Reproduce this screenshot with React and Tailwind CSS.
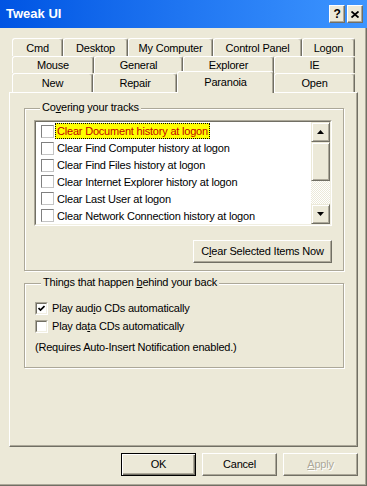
import { useState } from "react";

const raised = "border border-t-white border-l-white border-r-[#716F64] border-b-[#716F64] shadow-[inset_-1px_-1px_0_#ACA899]";
const sbButton = "border border-t-[#ECE9D8] border-l-[#ECE9D8] border-r-[#716F64] border-b-[#716F64] shadow-[inset_1px_1px_0_#ffffff,inset_-1px_-1px_0_#ACA899] bg-[#ECE9D8]";

const tabRows = [
	[
		{ label: "Cmd", w: "w-[51px]" },
		{ label: "Desktop", w: "w-[65px]" },
		{ label: "My Computer", w: "w-[85px]" },
		{ label: "Control Panel", w: "w-[89px]" },
		{ label: "Logon", w: "w-[53px]" },
	],
	[
		{ label: "Mouse", w: "w-[82px]" },
		{ label: "General", w: "w-[89px]" },
		{ label: "Explorer", w: "w-[91px]" },
		{ label: "IE", w: "w-[81px]" },
	],
	[
		{ label: "New", w: "w-[81px]" },
		{ label: "Repair", w: "w-[84px]" },
		{ label: "Paranoia", w: "w-[97px]", selected: true },
		{ label: "Open", w: "w-[81px]" },
	],
];

const rowHeights = [ "h-[18px]", "h-[17px]", "h-[19px]" ];

const trackItems = [
	"Clear Document history at logon",
	"Clear Find Computer history at logon",
	"Clear Find Files history at logon",
	"Clear Internet Explorer history at logon",
	"Clear Last User at logon",
	"Clear Network Connection history at logon",
];

function Tab({ label, w, selected }) {
	const base = "flex items-center justify-center border-t border-l border-r border-t-white border-l-white border-r-[#716F64] rounded-t-[3px] shadow-[inset_-1px_0_0_#ACA899] bg-[#ECE9D8]";
	if(selected) {
		return <div className={ `${ base } ${ w } relative z-10 -mt-[2px] h-[22px] self-start pb-[1px]` }>{ label }</div>;
	}
	return <div className={ `${ base } ${ w } h-full pt-[1px]` }>{ label }</div>;
}

function ListCheck() {
	return <div className="w-[13px] h-[13px] shrink-0 bg-white border border-t-[#808080] border-l-[#808080] border-r-[#c4c4c4] border-b-[#c4c4c4]" />;
}

function Check3D({ checked }) {
	return (
		<div className="w-[13px] h-[13px] shrink-0 border border-t-[#ACA899] border-l-[#ACA899] border-r-white border-b-white">
			<div className="w-full h-full bg-white border border-t-[#716F64] border-l-[#716F64] border-r-[#F1EFE2] border-b-[#F1EFE2] flex items-center justify-center">
				{ checked && (
					<svg width="7" height="7" viewBox="0 0 7 7">
						<path d="M0.5 3 L2.5 5 L6.5 1" fill="none" stroke="#000" strokeWidth="1.7" />
					</svg>
				) }
			</div>
		</div>
	);
}

function Arrow({ up }) {
	return (
		<svg width="7" height="4" viewBox="0 0 7 4">
			<polygon points={ up ? "3.5,0 7,4 0,4" : "0,0 7,0 3.5,4" } fill="#000" />
		</svg>
	);
}

function GroupBox({ label, children, className }) {
	return (
		<div className={ `flex flex-col w-[320px] border border-[#ACA899] shadow-[inset_1px_1px_0_#ffffff,1px_1px_0_#ffffff] ${ className }` }>
			<div className="-mt-[8px] ml-[6px] px-[2px] h-[13px] leading-[13px] self-start bg-[#ECE9D8]">{ label }</div>
			{ children }
		</div>
	);
}

export default function App() {
	const [ selected ] = useState(0);

	return (
		<div className="w-[367px] h-[486px] flex flex-col bg-[#ECE9D8] text-[11px] tracking-[-0.2px] text-black font-['Liberation_Sans',Arial,sans-serif] overflow-hidden">
			<div className="h-[28px] shrink-0 flex items-center pl-[6px] pr-[4px] bg-linear-to-r from-[#0054E3] to-[#3D95FF]">
				<span className="flex-1 text-white font-bold text-[13px] tracking-normal">Tweak UI</span>
				<div className="flex gap-[2px]">
					<div className={ `w-[16px] h-[18px] bg-[#ECE9D8] flex items-center justify-center font-bold text-[12px] ${ raised }` }>?</div>
					<div className={ `w-[16px] h-[18px] bg-[#ECE9D8] flex items-center justify-center ${ raised }` }>
						<svg width="8" height="7" viewBox="0 0 8 7">
							<path d="M0.5 0.5 L7.5 6.5 M7.5 0.5 L0.5 6.5" stroke="#000" strokeWidth="1.8" />
						</svg>
					</div>
				</div>
			</div>

			<div className="flex-1 flex flex-col pl-[9px] pt-[10px] border-r border-b border-[#716F64] shadow-[inset_-1px_-1px_0_#ACA899]">
				<div className="ml-[3px] w-[343px] flex flex-col">
					{ tabRows.map((row, i) => (
						<div key={ i } className={ `flex ${ rowHeights[ i ] }` }>
							{ row.map(t => <Tab key={ t.label } { ...t } />) }
						</div>
					)) }
				</div>

				<div className="w-[349px] h-[355px] flex flex-col pl-[14px] border border-t-white border-l-white border-r-[#716F64] border-b-[#716F64] shadow-[inset_-1px_-1px_0_#ACA899]">
					<GroupBox label={ <>Co<u>v</u>ering your tracks</> } className="mt-[15px] pl-[9px] pr-[11px] pb-[7px]">
						<div className="mt-[6px] w-[298px] h-[106px] border border-t-[#ACA899] border-l-[#ACA899] border-r-white border-b-white">
							<div className="w-full h-full flex bg-white border border-t-[#716F64] border-l-[#716F64] border-r-[#F1EFE2] border-b-[#F1EFE2]">
								<div className="flex-1 flex flex-col pt-[1px] pl-[5px]">
									{ trackItems.map((item, i) => (
										<div key={ item } className="h-[17px] flex items-center whitespace-nowrap">
											<ListCheck />
											<span className={ `ml-[1px] px-[1px] h-[16px] leading-[15px] border ${ i === selected ? "bg-[#FFFF00] text-[#C00000] border-dotted border-black" : "border-transparent" }` }>{ item }</span>
										</div>
									)) }
								</div>
								<div className="w-[19px] flex flex-col">
									<div className={ `h-[20px] flex items-center justify-center ${ sbButton }` }><Arrow up /></div>
									<div className={ `h-[39px] ${ sbButton }` } />
									<div className="flex-1 bg-[image:repeating-conic-gradient(#ffffff_0_25%,#ECE9D8_0_50%)] bg-[length:2px_2px]" />
									<div className={ `h-[20px] flex items-center justify-center ${ sbButton }` }><Arrow /></div>
								</div>
							</div>
						</div>
						<div className={ `mt-[14px] self-end w-[139px] h-[23px] flex items-center justify-center bg-[#ECE9D8] ${ raised }` }>
							<span>C<u>l</u>ear Selected Items Now</span>
						</div>
					</GroupBox>

					<GroupBox label={ <>Things that happen <u>b</u>ehind your back</> } className="mt-[12px] pl-[10px] pb-[13px]">
						<div className="mt-[10px] h-[18px] flex items-center">
							<Check3D checked />
							<span className="ml-[4px]">Play aud<u>i</u>o CDs automatically</span>
						</div>
						<div className="h-[18px] flex items-center">
							<Check3D />
							<span className="ml-[4px]">Play da<u>t</u>a CDs automatically</span>
						</div>
						<div className="mt-[6px] h-[13px] leading-[13px]">(Requires Auto-Insert Notification enabled.)</div>
					</GroupBox>
				</div>

				<div className="mt-[6px] w-[349px] flex justify-end gap-[6px]">
					<div className="w-[75px] h-[23px] flex items-center justify-center bg-[#ECE9D8] border border-black shadow-[inset_1px_1px_0_#ffffff,inset_-1px_-1px_0_#716F64,inset_-2px_-2px_0_#ACA899]">OK</div>
					<div className={ `w-[75px] h-[23px] flex items-center justify-center bg-[#ECE9D8] ${ raised }` }>Cancel</div>
					<div className={ `w-[75px] h-[23px] flex items-center justify-center bg-[#ECE9D8] text-[#ACA899] [text-shadow:1px_1px_0_#ffffff] ${ raised }` }>
						<span><u>A</u>pply</span>
					</div>
				</div>
			</div>
		</div>
	);
}
